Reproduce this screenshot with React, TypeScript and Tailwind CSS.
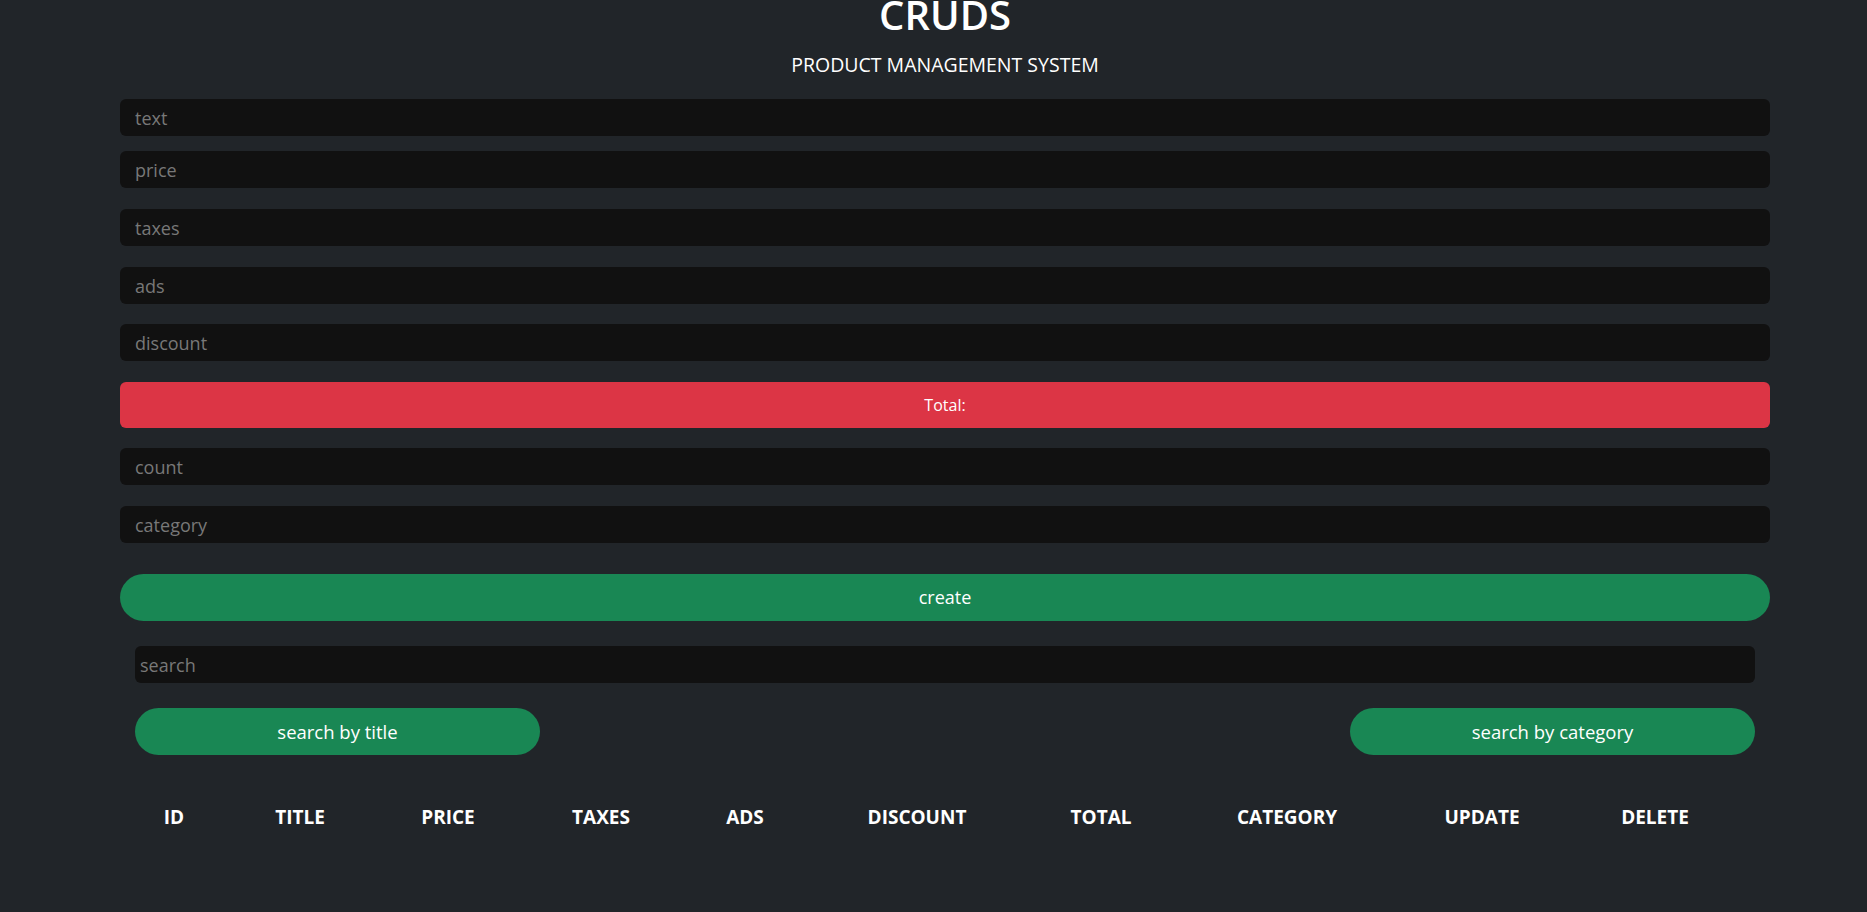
import React from "react"

const fields = ["text", "price", "taxes", "ads", "discount"]
const heads = [
  { label: "ID", w: "w-[78px]" },
  { label: "TITLE", w: "w-[174px]" },
  { label: "PRICE", w: "w-[122px]" },
  { label: "TAXES", w: "w-[184px]" },
  { label: "ADS", w: "w-[104px]" },
  { label: "DISCOUNT", w: "w-[240px]" },
  { label: "TOTAL", w: "w-[128px]" },
  { label: "CATEGORY", w: "w-[244px]" },
  { label: "UPDATE", w: "w-[146px]" },
  { label: "DELETE", w: "w-[200px]" },
]

function Field({ ph, className = "" }: { ph: string; className?: string }) {
  return (
    <input
      placeholder={ph}
      className={`block w-full h-[37px] bg-[#111111] rounded-[6px] px-[15px] text-[18px] text-white placeholder:text-[#787878] outline-none border-0 ${className}`}
    />
  )
}

export default function App() {
  return (
    <div className="min-h-screen bg-[#212529] text-white font-['Open_Sans',sans-serif]">
      <div className="w-[1650px] ml-[120px]">
        <div className="text-center">
          <h1 className="text-[40px] font-semibold leading-[30px] h-[30px]">CRUDS</h1>
          <p className="mt-[23px] text-[19.5px] leading-[24px]">PRODUCT MANAGEMENT SYSTEM</p>
        </div>

        <div className="mt-[22px]">
          <Field ph={fields[0]} />
          <Field ph={fields[1]} className="mt-[15px]" />
          <Field ph={fields[2]} className="mt-[21px]" />
          <Field ph={fields[3]} className="mt-[21px]" />
          <Field ph={fields[4]} className="mt-[20px]" />
          <div className="mt-[21px] h-[46px] bg-[#dc3545] rounded-[6px] flex items-center justify-center text-[16px]">
            Total:
          </div>
          <Field ph="count" className="mt-[20px]" />
          <Field ph="category" className="mt-[21px]" />
          <button className="block w-full mt-[31px] h-[47px] rounded-full bg-[#198754] text-[18px] text-white">
            create
          </button>
        </div>

        <div className="px-[15px] mt-[25px]">
          <input
            placeholder="search"
            className="block w-full h-[37px] bg-[#111111] rounded-[6px] px-[5px] text-[18px] text-white placeholder:text-[#787878] outline-none border-0"
          />
          <div className="mt-[25px] flex justify-between">
            <button className="w-[405px] h-[47px] rounded-full bg-[#198754] text-[18.5px] text-white">
              search by title
            </button>
            <button className="w-[405px] h-[47px] rounded-full bg-[#198754] text-[18.5px] text-white">
              search by category
            </button>
          </div>

          <table className="w-full table-fixed mt-[50px]">
            <thead>
              <tr>
                {heads.map((h) => (
                  <th key={h.label} className={`${h.w} text-center font-bold text-[19px] leading-[24px]`}>
                    {h.label}
                  </th>
                ))}
              </tr>
            </thead>
            <tbody></tbody>
          </table>
        </div>
      </div>
    </div>
  )
}
